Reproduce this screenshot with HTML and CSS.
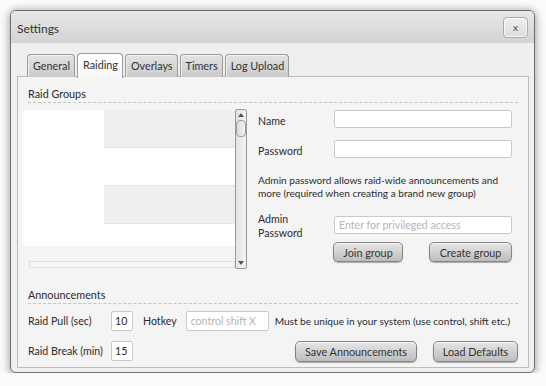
FILE: index.html
```html
<!DOCTYPE html>
<html lang="en">
  <head>
    <meta charset="UTF-8" />
    <title>Settings</title>
    <link rel="stylesheet" href="styles.css">
  </head>
  <body>
    <div class="dialog">
      <header class="titlebar">
        <span>Settings</span>
        <button class="close">x</button>
      </header>

      <div class="dialog_body">
        <nav class="tabs">
          <div class="tab">General</div>
          <div class="tab valgt">Raiding</div>
          <div class="tab">Overlays</div>
          <div class="tab">Timers</div>
          <div class="tab">Log Upload</div>
        </nav>

        <section class="panel">
          <h2 class="section_title">Raid Groups</h2>

          <div class="groups">
            <div class="listbox">
              <div class="rows">
                <div class="row grey"></div>
                <div class="row"></div>
                <div class="row grey"></div>
                <div class="row"></div>
              </div>
              <div class="hscroll"></div>
              <div class="vscroll">
                <span class="arrow up"></span>
                <span class="thumb"></span>
                <span class="arrow down"></span>
              </div>
            </div>

            <div class="join">
              <div class="field">
                <label>Name</label>
                <input type="text" />
              </div>
              <div class="field">
                <label>Password</label>
                <input type="text" />
              </div>
              <p class="note">
                Admin password allows raid-wide announcements and more
                (required when creating a brand new group)
              </p>
              <div class="field admin">
                <label>Admin<br />Password</label>
                <input type="text" placeholder="Enter for privileged access" />
              </div>
              <div class="knapper">
                <button class="knap join_knap">Join group</button>
                <button class="knap create_knap">Create group</button>
              </div>
            </div>
          </div>

          <h2 class="section_title">Announcements</h2>

          <div class="announce">
            <div class="line">
              <label class="akey">Raid Pull (sec)</label>
              <input class="num" type="text" value="10" />
              <label class="hotkey_label">Hotkey</label>
              <input class="hotkey" type="text" placeholder="control shift X" />
              <span class="hint">Must be unique in your system (use control, shift etc.)</span>
            </div>
            <div class="line">
              <label class="akey">Raid Break (min)</label>
              <input class="num" type="text" value="15" />
              <button class="knap save_knap">Save Announcements</button>
              <button class="knap load_knap">Load Defaults</button>
            </div>
          </div>
        </section>
      </div>
    </div>
  </body>
</html>
```

FILE: styles.css
```css
* {
  box-sizing: border-box;
  --border: #6f6f6f;
  --panel: #f4f4f4;
  --text: #2b2b2b;
  --field: #c9c9c9;
}

body {
  margin: 0;
  background-color: #fbfbfb;
  font-family: "Lato", "Open Sans", sans-serif;
  font-size: 10.6px;
  color: var(--text);
}

.dialog {
  width: 525px;
  height: 363px;
  margin: 10px 0 0 10px;
  border: 1px solid var(--border);
  border-radius: 6px;
  background-color: #efefef;
  box-shadow: 0 1px 8px 1px rgba(0, 0, 0, 0.35);
  overflow: hidden;
}

.titlebar {
  height: 32px;
  display: flex;
  justify-content: space-between;
  align-items: flex-start;
  padding: 0 6px 0 6px;
  background: linear-gradient(#e8e8e8, #d3d3d3);
}

.titlebar span {
  font-size: 12px;
  color: #333;
  margin-top: 10px;
}

.close {
  margin-top: 6px;
  width: 25px;
  height: 21px;
  padding: 0 0 2px 0;
  border: 1px solid #a9a9a9;
  border-radius: 4px;
  background: linear-gradient(#f0f0f0, #dcdcdc);
  box-shadow: inset 0 0 0 1px rgba(255, 255, 255, 0.7);
  font-family: "Lato", sans-serif;
  font-size: 10px;
  color: #444;
}

.dialog_body {
  padding: 10px 5px 4px 6px;
}

.tabs {
  display: flex;
  align-items: flex-end;
  gap: 2px;
  height: 24px;
  padding-left: 10px;
  position: relative;
  z-index: 1;
}

.tab {
  height: 23px;
  padding: 4px 4px 0 5px;
  border: 1px solid #9b9b9b;
  border-bottom: none;
  border-radius: 4px 4px 0 0;
  background: linear-gradient(#e3e3e3, #cbcbcb);
  box-shadow: inset 1px 1px 0 rgba(255, 255, 255, 0.6);
  color: #333;
  font-size: 10.8px;
}

.tab.valgt {
  height: 25px;
  margin-bottom: -1px;
  background: linear-gradient(#ffffff, #f8f8f8);
  box-shadow: none;
}

.panel {
  height: 292px;
  margin-top: -1px;
  padding: 0 10px 0 10px;
  border: 1px solid #bdbdbd;
  background-color: var(--panel);
}

.section_title {
  margin: 0;
  padding-top: 9px;
  height: 26px;
  line-height: 16px;
  font-size: 10.8px;
  font-weight: normal;
  border-bottom: 1px dashed #c4c4c4;
}

.groups {
  display: flex;
  gap: 11px;
  height: 160px;
  margin-top: 7px;
  margin-left: -5px;
  margin-bottom: 8px;
}

/* list of groups with its scrollbars */
.listbox {
  position: relative;
  width: 224px;
  height: 160px;
}

.rows {
  width: 212px;
  height: 136px;
  background-color: #fff;
  border-radius: 4px 0 0 4px;
  overflow: hidden;
}

.row {
  height: 38px;
  margin-left: 81px;
  border-bottom: 1px solid #e4e4e4;
}

.row.grey {
  background-color: #efefef;
}

.hscroll {
  margin: 15px 0 0 6px;
  width: 206px;
  height: 7px;
  border: 1px solid #e0e0e0;
  background-color: #f6f6f6;
}

.vscroll {
  position: absolute;
  top: -1px;
  right: 0;
  width: 12px;
  height: 160px;
  border: 1px solid #999;
  border-radius: 2px;
  background: linear-gradient(90deg, #e4e4e4, #f3f3f3);
}

.arrow {
  position: absolute;
  left: 2px;
  width: 0;
  height: 0;
  border-left: 3px solid transparent;
  border-right: 3px solid transparent;
}

.arrow.up {
  top: 3px;
  border-bottom: 4px solid #555;
}

.arrow.down {
  bottom: 3px;
  border-top: 4px solid #555;
}

.thumb {
  position: absolute;
  top: 10px;
  left: 0;
  width: 10px;
  height: 17px;
  border: 1px solid #9c9c9c;
  border-radius: 4px;
  background: linear-gradient(90deg, #dcdcdc, #f2f2f2);
}

/* join form */
.join {
  display: flex;
  flex-direction: column;
  width: 254px;
}

.field {
  display: flex;
  align-items: center;
  height: 18px;
}

.field + .field {
  margin-top: 12px;
}

.field label {
  width: 76px;
  padding-top: 3px;
  line-height: 14px;
}

.field input {
  width: 178px;
  height: 18px;
}

.field.admin {
  height: 28px;
  margin-top: 11px;
}

.field.admin label {
  padding-top: 1px;
}

input {
  border: 1px solid var(--field);
  border-radius: 2px;
  background-color: #fff;
  font-family: "Lato", sans-serif;
  font-size: 10.6px;
  color: var(--text);
  padding: 0 4px;
}

input::placeholder {
  color: #b5b5b5;
}

.note {
  margin: 16px 0 0 0;
  font-size: 10.1px;
  line-height: 13px;
}

.knapper {
  display: flex;
  justify-content: space-between;
  margin-top: 3px;
  padding-left: 75px;
}

.knap {
  height: 20px;
  padding: 0 6px;
  border: 1px solid #858585;
  border-radius: 5px;
  background: linear-gradient(#e6e6e6, #bdbdbd);
  box-shadow: 0 1px 1px rgba(0, 0, 0, 0.3), inset 0 1px 0 rgba(255, 255, 255, 0.6);
  font-family: "Lato", sans-serif;
  font-size: 10.8px;
  color: #333;
}

.join_knap {
  width: 70px;
}

.create_knap {
  width: 83px;
}

/* announcements */
.announce {
  margin-top: 7px;
}

.line {
  display: flex;
  align-items: center;
  height: 20px;
  margin-bottom: 10px;
}

.akey {
  width: 83px;
}

.num {
  width: 22px;
  height: 20px;
  padding: 0 3px;
}

.hotkey_label {
  margin: 0 9px 0 10px;
}

.hotkey {
  width: 83px;
  height: 20px;
}

.hint {
  margin-left: 6px;
  font-size: 10.1px;
  white-space: nowrap;
}

.save_knap {
  margin-left: auto;
  width: 122px;
  height: 21px;
}

.load_knap {
  margin-left: 16px;
  width: 85px;
  height: 21px;
}
```
